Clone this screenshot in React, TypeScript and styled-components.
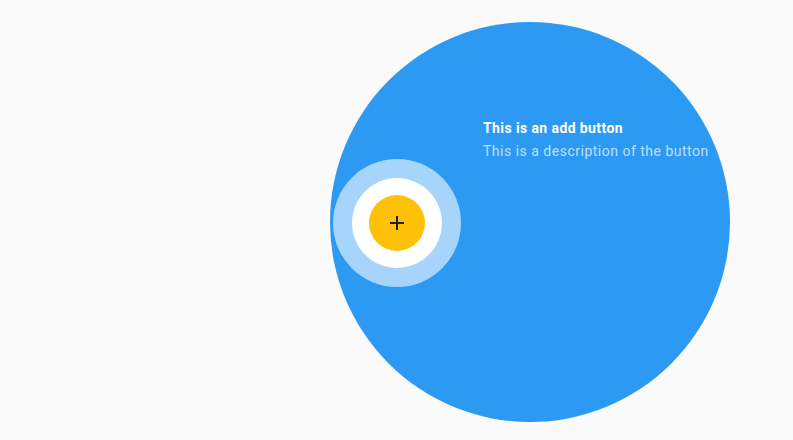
import React from "react";
import styled, { createGlobalStyle } from "styled-components";

const Global = createGlobalStyle`
  html, body { margin: 0; padding: 0; background: #fafafa; }
  body { font-family: Roboto, "Noto Sans", sans-serif; }
  #root { width: 793px; height: 440px; }
`;

const Stage = styled.div`
  position: relative;
  width: 793px;
  height: 440px;
  overflow: hidden;
  background: #fafafa;
`;

const Backdrop = styled.div`
  position: absolute;
  left: 330px;
  top: 22px;
  width: 400px;
  height: 400px;
  border-radius: 50%;
  background: #2c9af3;
`;

const Pulse = styled.div`
  position: absolute;
  left: 333px;
  top: 159px;
  width: 128px;
  height: 128px;
  border-radius: 50%;
  background: #a6d4fa;
  display: flex;
  align-items: center;
  justify-content: center;
`;

const Halo = styled.div`
  width: 90px;
  height: 90px;
  border-radius: 50%;
  background: #ffffff;
  display: flex;
  align-items: center;
  justify-content: center;
`;

const Fab = styled.button`
  width: 56px;
  height: 56px;
  border-radius: 50%;
  border: none;
  padding: 0;
  background: #ffc107;
  display: flex;
  align-items: center;
  justify-content: center;
  color: #212121;
  cursor: pointer;
`;

const Copy = styled.div`
  position: absolute;
  left: 483px;
  top: 118px;
  display: flex;
  flex-direction: column;
  gap: 3px;
  white-space: nowrap;
`;

const Title = styled.div`
  font-size: 14px;
  line-height: 20px;
  font-weight: 700;
  letter-spacing: 0.4px;
  color: #ffffff;
`;

const Description = styled.div`
  font-size: 14px;
  line-height: 20px;
  font-weight: 400;
  letter-spacing: 0.5px;
  color: rgba(255, 255, 255, 0.7);
`;

export default function App() {
  return (
    <>
      <Global />
      <Stage>
        <Backdrop />
        <Copy>
          <Title>This is an add button</Title>
          <Description>This is a description of the button</Description>
        </Copy>
        <Pulse>
          <Halo>
            <Fab aria-label="add">
              <svg width="14" height="14" viewBox="0 0 14 14">
                <rect x="6" y="0" width="2" height="14" fill="currentColor" />
                <rect x="0" y="6" width="14" height="2" fill="currentColor" />
              </svg>
            </Fab>
          </Halo>
        </Pulse>
      </Stage>
    </>
  );
}
